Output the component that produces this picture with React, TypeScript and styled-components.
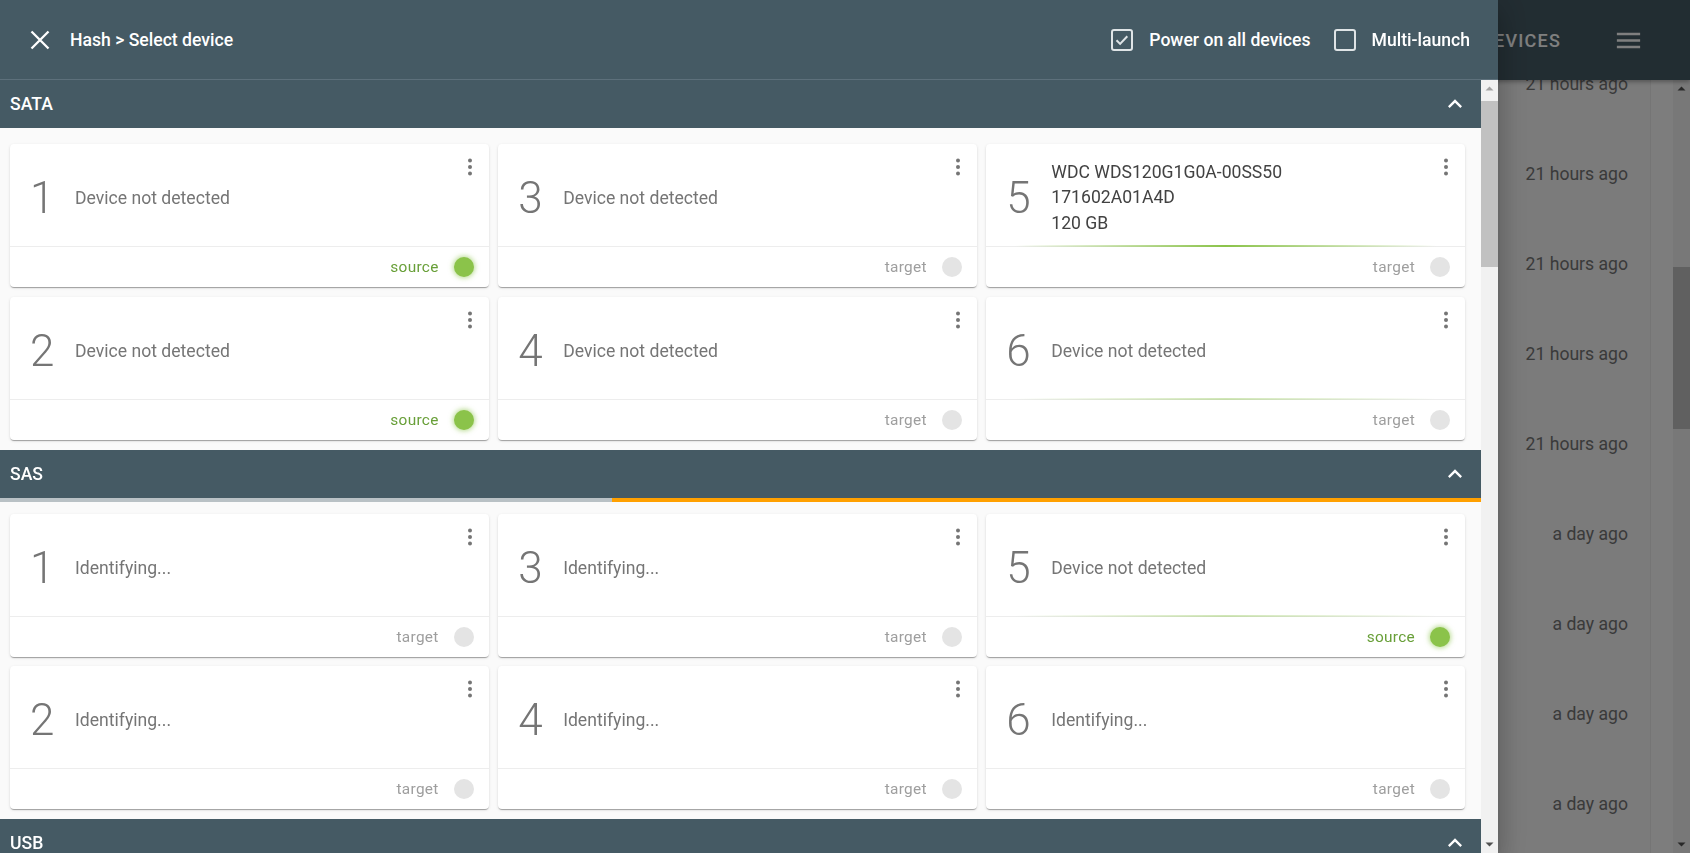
import { useLayoutEffect, useRef } from 'react';
import styled, { createGlobalStyle } from 'styled-components';

type Role = 'source' | 'target';

interface CardData {
  slot: number;
  status?: string;
  info?: string[];
  role: Role;
  glow?: number;
}

interface SectionData {
  name: string;
  progress?: number;
  cards: CardData[];
}

const nd = 'Device not detected';
const idf = 'Identifying...';

// two rows per block: odd slots on top, even slots below
const usbSlots = [1, 3, 5, 2, 4, 6, 7, 9, 11, 8, 10, 12, 13, 15, 17, 14, 16, 18];

const sections: SectionData[] = [
  {
    name: 'SATA',
    cards: [
      { slot: 1, status: nd, role: 'source' },
      { slot: 3, status: nd, role: 'target' },
      { slot: 5, info: ['WDC WDS120G1G0A-00SS50', '171602A01A4D', '120 GB'], role: 'target', glow: 1 },
      { slot: 2, status: nd, role: 'source' },
      { slot: 4, status: nd, role: 'target' },
      { slot: 6, status: nd, role: 'target', glow: 0.4 },
    ],
  },
  {
    name: 'SAS',
    progress: 41.3,
    cards: [
      { slot: 1, status: idf, role: 'target' },
      { slot: 3, status: idf, role: 'target' },
      { slot: 5, status: nd, role: 'source', glow: 0.4 },
      { slot: 2, status: idf, role: 'target' },
      { slot: 4, status: idf, role: 'target' },
      { slot: 6, status: idf, role: 'target' },
    ],
  },
  {
    name: 'USB',
    cards: usbSlots.map((slot) => ({ slot, status: nd, role: 'target' as Role })),
  },
  {
    name: 'NVMe',
    cards: [1, 3, 5, 2, 4, 6].map((slot) => ({ slot, status: nd, role: 'target' as Role })),
  },
];

const history = [
  ...Array.from({ length: 9 }, () => 'an hour ago'),
  ...Array.from({ length: 5 }, () => '21 hours ago'),
  ...Array.from({ length: 14 }, () => 'a day ago'),
  ...Array.from({ length: 12 }, () => '2 days ago'),
];

const GlobalStyle = createGlobalStyle`
  html, body {
    margin: 0;
    height: 100%;
    overflow: hidden;
  }
  body {
    font-family: Roboto, 'Liberation Sans', sans-serif;
    background: #f5f5f5;
  }
  #root {
    height: 100%;
  }
`;

interface ScrollbarProps {
  thumbTop: number;
  thumbSize: number;
  atTop?: boolean;
}

const Scrollbar = ({ thumbTop, thumbSize, atTop }: ScrollbarProps) => (
  <Bar>
    <ArrowButton>
      <Arrow viewBox='0 0 17 17' dim={atTop}>
        <path d='M4.5 10.5 L8.5 6.5 L12.5 10.5 Z' />
      </Arrow>
    </ArrowButton>
    <Track>
      <Thumb style={{ top: thumbTop, height: thumbSize }} />
    </Track>
    <ArrowButton>
      <Arrow viewBox='0 0 17 17'>
        <path d='M4.5 6.5 L8.5 10.5 L12.5 6.5 Z' />
      </Arrow>
    </ArrowButton>
  </Bar>
);

const CheckIcon = ({ checked }: { checked?: boolean }) => (
  <BoxIcon viewBox='0 0 24 24'>
    <rect x='2' y='2' width='20' height='20' rx='2' />
    {checked && <path d='M6.5 12.3l3.6 3.6 7.2-7.6' />}
  </BoxIcon>
);

const DeviceCard = ({ card }: { card: CardData }) => (
  <Card>
    <CardMain>
      <Slot>{card.slot}</Slot>
      {card.info ? (
        <Info>
          {card.info.map((l) => (
            <div key={l}>{l}</div>
          ))}
        </Info>
      ) : (
        <Status>{card.status}</Status>
      )}
      <MoreIcon viewBox='0 0 24 24'>
        <circle cx='12' cy='5.5' r='2' />
        <circle cx='12' cy='12' r='2' />
        <circle cx='12' cy='18.5' r='2' />
      </MoreIcon>
    </CardMain>
    <CardFooter glow={card.glow ?? 0}>
      <RoleLabel role={card.role}>{card.role}</RoleLabel>
      <RoleDot role={card.role} />
    </CardFooter>
  </Card>
);

const App = () => {
  const listRef = useRef<HTMLDivElement>(null);

  useLayoutEffect(() => {
    if (listRef.current) listRef.current.scrollTop = 851;
  }, []);

  return (
    <>
      <GlobalStyle />
      <Shell>
        <AppBar>
          <Tab>Devices</Tab>
          <MenuIcon viewBox='0 0 24 24'>
            <path d='M3 18h18v-2H3v2zm0-5h18v-2H3v2zm0-7v2h18V6H3z' />
          </MenuIcon>
        </AppBar>
        <ScrollRow>
          <HistoryList ref={listRef}>
            {history.map((t, i) => (
              <HistoryRow key={i}>
                <Time>{t}</Time>
                <Gutter />
              </HistoryRow>
            ))}
          </HistoryList>
          <Scrollbar thumbTop={170} thumbSize={162} />
        </ScrollRow>
      </Shell>
      <Scrim />
      <Drawer>
        <Header>
          <CloseIcon viewBox='0 0 24 24'>
            <path d='M3.5 3.5 L20.5 20.5 M20.5 3.5 L3.5 20.5' />
          </CloseIcon>
          <Title>Hash &gt; Select device</Title>
          <Options>
            <Option>
              <CheckIcon checked />
              Power on all devices
            </Option>
            <Option>
              <CheckIcon />
              Multi-launch
            </Option>
          </Options>
        </Header>
        <ScrollRow>
          <Body>
            {sections.map((s) => (
              <Section key={s.name}>
                <SectionBar>
                  <span>{s.name}</span>
                  <Chevron viewBox='0 0 24 24'>
                    <path d='M12 8l-6 6 1.41 1.41L12 10.83l4.59 4.58L18 14z' />
                  </Chevron>
                </SectionBar>
                <Progress>
                  {s.progress !== undefined && (
                    <>
                      <Buffer style={{ width: `${s.progress}%` }} />
                      <Active />
                    </>
                  )}
                </Progress>
                <Grid>
                  {s.cards.map((c, i) => (
                    <DeviceCard key={i} card={c} />
                  ))}
                </Grid>
              </Section>
            ))}
          </Body>
          <Scrollbar thumbTop={4} thumbSize={166} atTop />
        </ScrollRow>
      </Drawer>
    </>
  );
};

/* scrollbar */

const Bar = styled.div`
  width: 17px;
  flex-shrink: 0;
  display: flex;
  flex-direction: column;
  background: #f1f1f1;
`;

const ArrowButton = styled.div`
  height: 17px;
  display: flex;
  align-items: center;
  justify-content: center;
`;

const Arrow = styled.svg<{ dim?: boolean }>`
  width: 17px;
  height: 17px;
  fill: ${({ dim }) => (dim ? '#a3a3a3' : '#505050')};
`;

const Track = styled.div`
  flex: 1;
  position: relative;
`;

const Thumb = styled.div`
  position: absolute;
  left: 0;
  right: 0;
  background: #c1c1c1;
`;

/* background page */

const Shell = styled.div`
  height: 100vh;
  display: flex;
  flex-direction: column;
  background: #f6f6f6;
`;

const AppBar = styled.div`
  height: 80px;
  flex-shrink: 0;
  background: #455a64;
  display: flex;
  align-items: center;
  justify-content: flex-end;
  padding-right: 46px;
  position: relative;
  box-shadow: 0 2px 4px rgba(0, 0, 0, 0.3);
`;

const Tab = styled.div`
  font-size: 18px;
  font-weight: 500;
  letter-spacing: 1.2px;
  text-transform: uppercase;
  color: #fff;
  margin-right: 52px;
`;

const MenuIcon = styled.svg`
  width: 31px;
  height: 31px;
  fill: #fff;
`;

const ScrollRow = styled.div`
  flex: 1;
  min-height: 0;
  display: flex;
`;

const HistoryList = styled.div`
  flex: 1;
  overflow: hidden;
`;

const HistoryRow = styled.div`
  height: 90px;
  display: flex;
  justify-content: flex-end;
`;

const Time = styled.div`
  align-self: center;
  font-size: 17.6px;
  color: #757575;
  margin-right: 22px;
`;

const Gutter = styled.div`
  width: 22px;
  border-left: 1px solid #ebebeb;
  background: #fbfbfb;
`;

const Scrim = styled.div`
  position: fixed;
  inset: 0;
  background: rgba(0, 0, 0, 0.5);
`;

/* drawer */

const Drawer = styled.div`
  position: fixed;
  top: 0;
  left: 0;
  bottom: 0;
  width: 1498px;
  display: flex;
  flex-direction: column;
  background: #fafafa;
  box-shadow: 0 8px 10px -5px rgba(0, 0, 0, 0.2), 0 16px 24px 2px rgba(0, 0, 0, 0.14),
    0 6px 30px 5px rgba(0, 0, 0, 0.12);
`;

const Header = styled.div`
  height: 80px;
  flex-shrink: 0;
  box-sizing: border-box;
  border-bottom: 1px solid #5d707b;
  background: #455a64;
  color: #fff;
  display: flex;
  align-items: center;
  padding: 0 28px;
`;

const CloseIcon = styled.svg`
  width: 24px;
  height: 24px;
  stroke: #fff;
  stroke-width: 2.3;
  fill: none;
`;

const Title = styled.div`
  margin-left: 18px;
  font-size: 17.6px;
  font-weight: 500;
`;

const Options = styled.div`
  margin-left: auto;
  display: flex;
  align-items: center;
  gap: 22px;
`;

const Option = styled.label`
  display: flex;
  align-items: center;
  gap: 15px;
  font-size: 17.6px;
  font-weight: 500;
`;

const BoxIcon = styled.svg`
  width: 24px;
  height: 24px;
  fill: none;
  stroke: #dfe4e6;
  stroke-width: 2;
`;

const Body = styled.div`
  flex: 1;
  overflow: hidden;
`;

const Section = styled.section`
  padding-bottom: 10px;
`;

const SectionBar = styled.div`
  height: 48px;
  background: #455a64;
  color: #fff;
  display: flex;
  align-items: center;
  justify-content: space-between;
  padding: 0 12px 0 10px;
  font-size: 17.6px;
  font-weight: 500;
`;

const Chevron = styled.svg`
  width: 28px;
  height: 28px;
  fill: #fff;
`;

const Progress = styled.div`
  height: 4px;
  display: flex;
`;

const Buffer = styled.div`
  background: #b9c1c5;
`;

const Active = styled.div`
  flex: 1;
  background: #ffa000;
`;

const Grid = styled.div`
  display: grid;
  grid-template-columns: repeat(3, 1fr);
  gap: 9.5px;
  padding: 12px 16px 0 10px;
`;

const Card = styled.div`
  background: #fff;
  border-radius: 4px;
  height: 143px;
  display: flex;
  flex-direction: column;
  box-shadow: 0 2px 1px -1px rgba(0, 0, 0, 0.2), 0 1px 1px 0 rgba(0, 0, 0, 0.14),
    0 1px 3px 0 rgba(0, 0, 0, 0.12);
`;

const CardMain = styled.div`
  height: 102px;
  box-sizing: border-box;
  padding: 6px 7px 0 20px;
  display: flex;
  align-items: center;
`;

const Slot = styled.div`
  width: 45px;
  font-size: 44px;
  font-weight: 300;
  color: #757575;
  line-height: 1;
`;

const Status = styled.div`
  flex: 1;
  font-size: 17.6px;
  color: #757575;
`;

const Info = styled.div`
  flex: 1;
  font-size: 17.6px;
  line-height: 25.5px;
  color: #424242;
`;

const MoreIcon = styled.svg`
  align-self: flex-start;
  margin-top: 5px;
  width: 24px;
  height: 24px;
  fill: #757575;
`;

const CardFooter = styled.div<{ glow: number }>`
  flex: 1;
  position: relative;
  border-top: 1px solid #ededed;
  display: flex;
  align-items: center;
  justify-content: flex-end;
  padding-right: 15px;

  &::before {
    content: '';
    position: absolute;
    left: 6%;
    right: 6%;
    top: -2px;
    height: 2px;
    opacity: ${({ glow }) => glow};
    background: linear-gradient(90deg, rgba(139, 195, 74, 0), #8bc34a 50%, rgba(139, 195, 74, 0));
  }
`;

const RoleLabel = styled.span<{ role: Role }>`
  font-size: 15.4px;
  letter-spacing: 0.3px;
  color: ${({ role }) => (role === 'source' ? '#689f38' : '#9e9e9e')};
  margin-right: 15px;
`;

const RoleDot = styled.span<{ role: Role }>`
  width: 20px;
  height: 20px;
  border-radius: 50%;
  background: ${({ role }) => (role === 'source' ? '#8bc34a' : '#e4e4e4')};
  box-shadow: ${({ role }) => (role === 'source' ? '0 0 5px 1px rgba(139, 195, 74, 0.6)' : 'none')};
`;

export default App;
